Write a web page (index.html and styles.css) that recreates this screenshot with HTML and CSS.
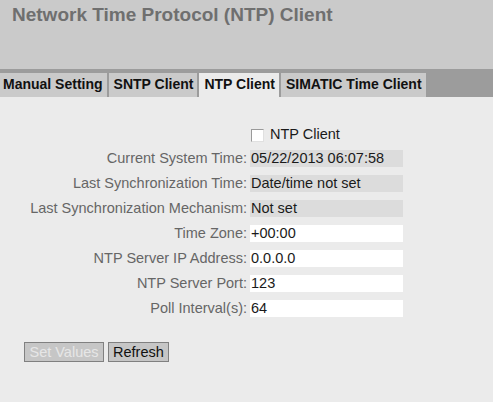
FILE: index.html
```html
<!DOCTYPE html>
<html>
<head>
<meta charset="utf-8">
<link rel="stylesheet" href="styles.css">
</head>
<body>
<div class="header">
  <h1 class="title">Network Time Protocol (NTP) Client</h1>
</div>
<div class="tabbar">
  <div class="tab first">Manual Setting</div>
  <div class="tab">SNTP Client</div>
  <div class="tab active">NTP Client</div>
  <div class="tab">SIMATIC Time Client</div>
</div>
<div class="content">
  <div class="form">
    <div class="label"></div>
    <div class="check-row"><span class="checkbox"></span><span class="check-label">NTP Client</span></div>

    <div class="label">Current System Time:</div>
    <div class="field ro">05/22/2013 06:07:58</div>

    <div class="label">Last Synchronization Time:</div>
    <div class="field ro">Date/time not set</div>

    <div class="label">Last Synchronization Mechanism:</div>
    <div class="field ro">Not set</div>

    <div class="label">Time Zone:</div>
    <div class="field">+00:00</div>

    <div class="label">NTP Server IP Address:</div>
    <div class="field">0.0.0.0</div>

    <div class="label">NTP Server Port:</div>
    <div class="field">123</div>

    <div class="label">Poll Interval(s):</div>
    <div class="field">64</div>
  </div>
  <div class="buttons">
    <button class="btn disabled">Set Values</button>
    <button class="btn">Refresh</button>
  </div>
</div>
</body>
</html>
```
FILE: styles.css
```css
html, body {
  margin: 0;
  padding: 0;
}
body {
  background: #ebebeb;
  font-family: "Liberation Sans", Arial, sans-serif;
  height: 402px;
  overflow: hidden;
}
.header {
  background: #cacaca;
  height: 69px;
  box-sizing: border-box;
  padding: 4px 0 0 12px;
}
.title {
  margin: 0;
  font-size: 19px;
  line-height: 22px;
  font-weight: bold;
  color: #6f6f6f;
}
.tabbar {
  background: #9c9c9c;
  height: 28px;
  box-sizing: border-box;
  padding-top: 4px;
  display: flex;
  align-items: stretch;
}
.tab {
  background: #cacaca;
  color: #111;
  font-weight: bold;
  font-size: 14px;
  line-height: 20px;
  padding: 1px 4px 0 5px;
  margin-right: 2px;
}
.tab.first {
  padding-left: 3px;
}
.tab.active {
  background: #ebebeb;
}
.content {
  padding-top: 28px;
}
.form {
  display: grid;
  grid-template-columns: 247px 153px;
  column-gap: 3px;
  row-gap: 8px;
  font-size: 14.5px;
}
.label {
  text-align: right;
  color: #666;
  line-height: 17px;
  height: 17px;
  white-space: nowrap;
}
.field {
  height: 17px;
  line-height: 17px;
  background: #fff;
  color: #1a1a1a;
  padding-left: 1px;
  white-space: nowrap;
}
.field.ro {
  background: #dcdcdc;
}
.check-row {
  display: flex;
  align-items: center;
  height: 17px;
  padding-left: 1px;
}
.checkbox {
  display: inline-block;
  width: 11px;
  height: 11px;
  background: #fff;
  border: 1px solid #9a9a9a;
  border-right-color: #e0e0e0;
  border-bottom-color: #e0e0e0;
  margin-top: 3px;
}
.check-label {
  margin-left: 6px;
  color: #1a1a1a;
}
.buttons {
  display: flex;
  gap: 4px;
  padding: 25px 0 0 24px;
}
.btn {
  font-family: "Liberation Sans", Arial, sans-serif;
  font-size: 14.5px;
  height: 20px;
  line-height: 16px;
  padding: 0 4px;
  margin: 0;
  background: #c6c6c6;
  border: 1px solid #808080;
  color: #111;
  border-radius: 0;
}
.btn.disabled {
  color: #e6e6e6;
  width: 80px;
}
```
